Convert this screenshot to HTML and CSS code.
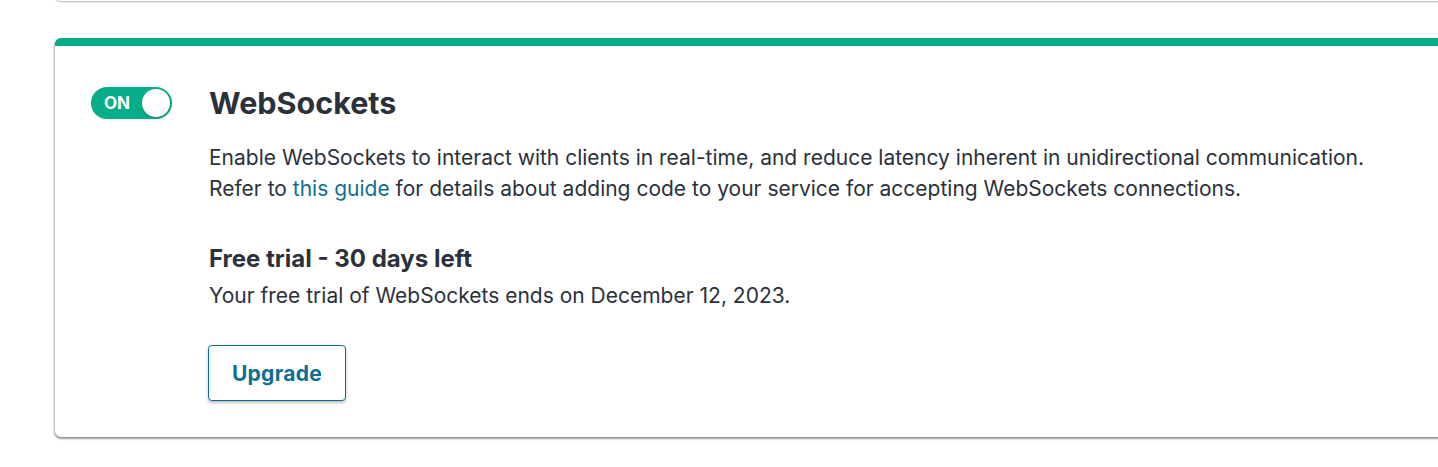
FILE: index.html
```html
<!DOCTYPE html>
<html lang="en">
<head>
<meta charset="utf-8">
<title>WebSockets</title>
<link rel="stylesheet" href="styles.css">
</head>
<body>
<div class="page">
  <div class="prev-card"></div>
  <section class="card">
    <div class="card-row">
      <div class="toggle" role="switch" aria-checked="true">
        <span class="toggle-label">ON</span>
        <span class="toggle-knob"></span>
      </div>
      <div class="card-main">
        <h2 class="title">WebSockets</h2>
        <p class="desc">Enable WebSockets to interact with clients in real-time, and reduce latency inherent in unidirectional communication.<br>Refer to <a class="link" href="#">this guide</a> for details about adding code to your service for accepting WebSockets connections.</p>
        <h3 class="trial-title">Free trial - 30 days left</h3>
        <p class="trial-text">Your free trial of WebSockets ends on December 12, 2023.</p>
        <button class="btn" type="button">Upgrade</button>
      </div>
    </div>
  </section>
</div>
</body>
</html>
```
FILE: styles.css
```css
html {
  overflow: hidden;
}
body {
  margin: 0;
  padding: 0;
  background: #ffffff;
  font-family: Inter, "Noto Sans", sans-serif;
  color: #2b313b;
}
.page {
  padding-left: 55px;
  padding-bottom: 20px;
  width: 1500px;
}
.prev-card {
  height: 20px;
  margin-top: -19px;
  border-radius: 0 0 6px 6px;
  background: #fff;
  box-shadow: 0 1px 2px rgba(60, 70, 80, 0.4);
}
.card {
  margin-top: 37px;
  background: #fff;
  border-top: 8px solid #05ad8b;
  border-radius: 6px;
  box-shadow: 0 2px 2px rgba(60, 70, 80, 0.45), -1px 1px 2px rgba(60, 70, 80, 0.3);
  padding: 41px 36px 36px 36px;
}
.card-row {
  display: flex;
  align-items: flex-start;
  gap: 37px;
}
.toggle {
  flex: none;
  width: 81px;
  height: 32px;
  box-sizing: border-box;
  border-radius: 16px;
  background: #05ad8b;
  display: flex;
  align-items: center;
  justify-content: space-between;
  padding: 0 2px 0 13px;
  box-shadow: 0 1px 2px rgba(0, 0, 0, 0.1);
}
.toggle-label {
  color: #fff;
  font-weight: 700;
  font-size: 17px;
}
.toggle-knob {
  width: 28px;
  height: 28px;
  border-radius: 50%;
  background: #fff;
  box-shadow: 0 1px 2px rgba(0, 0, 0, 0.2);
}
.card-main {
  flex: 1;
}
.title {
  margin: 0;
  font-size: 30.5px;
  line-height: 32px;
  font-weight: 700;
  color: #2b313b;
}
.desc {
  margin: 23px 0 0;
  font-size: 21px;
  line-height: 31px;
}
.link {
  color: #0f6f92;
  text-decoration: none;
}
.trial-title {
  margin: 40px 0 0;
  font-size: 24px;
  line-height: 30px;
  font-weight: 700;
}
.trial-text {
  margin: 6px 0 0;
  font-size: 21px;
  line-height: 31px;
}
.btn {
  margin-top: 34px;
  margin-left: -1px;
  display: block;
  width: 138px;
  height: 56px;
  background: #fff;
  border: 1px solid #0c6f8f;
  border-radius: 4px;
  box-shadow: 0 2px 3px rgba(40, 50, 60, 0.3);
  color: #0f6f92;
  font-family: Inter, "Noto Sans", sans-serif;
  font-size: 21px;
  font-weight: 700;
  letter-spacing: 0.3px;
  padding: 0;
  cursor: pointer;
}
```
